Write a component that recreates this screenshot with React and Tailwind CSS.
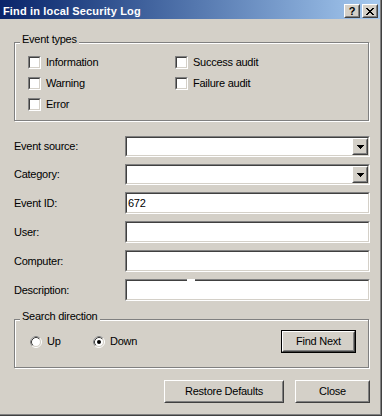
import React from "react";

function Sunken({ className = "", inner = "", children }) {
  return (
    <div className={"relative border border-t-[#808080] border-l-[#808080] border-b-white border-r-white " + className}>
      <div className={"h-full w-full border border-t-[#404040] border-l-[#404040] border-b-[#D4D0C8] border-r-[#D4D0C8] bg-white " + inner}>
        {children}
      </div>
    </div>
  );
}

function Raised({ className = "", children }) {
  return (
    <div className={"border border-t-white border-l-white border-b-[#404040] border-r-[#404040] bg-[#D4D0C8] " + className}>
      <div className="h-full w-full border border-t-[#D4D0C8] border-l-[#D4D0C8] border-b-[#808080] border-r-[#808080] flex items-center justify-center">
        {children}
      </div>
    </div>
  );
}

function Arrow() {
  return (
    <svg width="7" height="4" viewBox="0 0 7 4" shapeRendering="crispEdges">
      <rect x="0" y="0" width="7" height="1" fill="#000" />
      <rect x="1" y="1" width="5" height="1" fill="#000" />
      <rect x="2" y="2" width="3" height="1" fill="#000" />
      <rect x="3" y="3" width="1" height="1" fill="#000" />
    </svg>
  );
}

function Combo() {
  return (
    <Sunken className="h-[21px] flex-1" inner="flex justify-end">
      <Raised className="w-[16px] h-full">
        <Arrow />
      </Raised>
    </Sunken>
  );
}

function Check({ label }) {
  return (
    <div className="flex items-center gap-[5px] h-[13px] leading-[13px]">
      <Sunken className="w-[13px] h-[13px]" />
      <span>{label}</span>
    </div>
  );
}

function Radio({ label, checked }) {
  return (
    <div className="flex items-center gap-[5px] h-[13px] leading-[13px]">
      <svg width="12" height="12" viewBox="0 0 12 12">
        <circle cx="6" cy="6" r="5.5" fill="none" stroke="#fff" strokeWidth="1" />
        <path d="M2.11 9.89 A5.5 5.5 0 0 1 9.89 2.11" fill="none" stroke="#808080" strokeWidth="1" />
        <circle cx="6" cy="6" r="4.5" fill="#fff" stroke="#D4D0C8" strokeWidth="1" />
        <path d="M2.82 9.18 A4.5 4.5 0 0 1 9.18 2.82" fill="none" stroke="#404040" strokeWidth="1" />
        {checked && <circle cx="6" cy="6" r="2" fill="#000" />}
      </svg>
      <span>{label}</span>
    </div>
  );
}

function Group({ title, className = "", children }) {
  return (
    <div className={"relative mr-[1px] border border-[#808080] shadow-[inset_1px_1px_0_#fff,1px_1px_0_#fff] " + className}>
      <span className="absolute left-[5px] -top-[10px] px-[2px] bg-[#D4D0C8] leading-[13px]">{title}</span>
      {children}
    </div>
  );
}

function Field({ label, children }) {
  return (
    <div className="flex items-center">
      <div className="w-[111px] leading-[13px]">{label}</div>
      {children}
    </div>
  );
}

export default function App() {
  return (
    <div className="w-[382px] h-[416px] bg-[#D4D0C8] font-['Liberation_Sans',Arial,sans-serif] text-[11px] tracking-[-0.25px] text-black border-r border-b border-r-[#404040] border-b-[#404040] overflow-hidden">
      <div className="h-full border-r border-b border-r-[#808080] border-b-[#808080] flex flex-col">
        <div className="h-[19px] flex justify-between bg-linear-to-r from-[#0A246A] to-[#A6CAF0]">
          <div className="pl-[3px] pt-[4px] leading-[14px] text-white font-bold tracking-[0.15px]">
            Find in local Security Log
          </div>
          <div className="flex gap-[2px] pt-[4px] pr-[2px]">
            <Raised className="w-[16px] h-[14px]">
              <span className="font-bold text-[11px] leading-[10px] tracking-normal font-['Liberation_Sans',Arial,sans-serif]">?</span>
            </Raised>
            <Raised className="w-[16px] h-[14px]">
              <svg width="8" height="7" viewBox="0 0 8 7" shapeRendering="crispEdges">
                <path d="M0 0h2v1h-2zM6 0h2v1h-2zM1 1h2v1h-2zM5 1h2v1h-2zM2 2h4v1h-4zM3 3h2v1h-2zM2 4h4v1h-4zM1 5h2v1h-2zM5 5h2v1h-2zM0 6h2v1h-2zM6 6h2v1h-2z" fill="#000" />
              </svg>
            </Raised>
          </div>
        </div>

        <div className="flex flex-col pl-[14px] pr-[10px]">
          <Group title="Event types" className="mt-[23px] h-[79px]">
            <div className="grid grid-cols-[147px_1fr] gap-y-[8px] pt-[13px] pl-[13px]">
              <Check label="Information" />
              <Check label="Success audit" />
              <Check label="Warning" />
              <Check label="Failure audit" />
              <Check label="Error" />
            </div>
          </Group>

          <div className="mt-[15px] flex flex-col gap-[7px]">
            <Field label="Event source:">
              <Combo />
            </Field>
            <Field label="Category:">
              <Combo />
            </Field>
            <Field label="Event ID:">
              <Sunken className="h-[22px] flex-1" inner="pl-[1px] leading-[18px]">
                672
              </Sunken>
            </Field>
            <Field label="User:">
              <Sunken className="h-[22px] flex-1" />
            </Field>
            <Field label="Computer:">
              <Sunken className="h-[22px] flex-1" />
            </Field>
            <Field label="Description:">
              <Sunken className="h-[22px] flex-1">
                <span className="absolute left-[61px] -top-[1px] w-[8px] h-[2px] bg-white" />
              </Sunken>
            </Field>
          </div>

          <Group title="Search direction" className="mt-[18px] h-[49px]">
            <div className="flex items-center h-[23px] mt-[10px] pl-[15px] pr-[12px]">
              <div className="w-[63px]">
                <Radio label="Up" />
              </div>
              <Radio label="Down" checked />
              <div className="ml-auto border border-black">
                <Raised className="w-[73px] h-[21px]">
                  <span className="leading-[13px]">Find Next</span>
                </Raised>
              </div>
            </div>
          </Group>

          <div className="mt-[12px] flex justify-end gap-[11px]">
            <Raised className="w-[120px] h-[23px]">
              <span className="leading-[13px]">Restore Defaults</span>
            </Raised>
            <Raised className="w-[75px] h-[23px]">
              <span className="leading-[13px]">Close</span>
            </Raised>
          </div>
        </div>
      </div>
    </div>
  );
}
